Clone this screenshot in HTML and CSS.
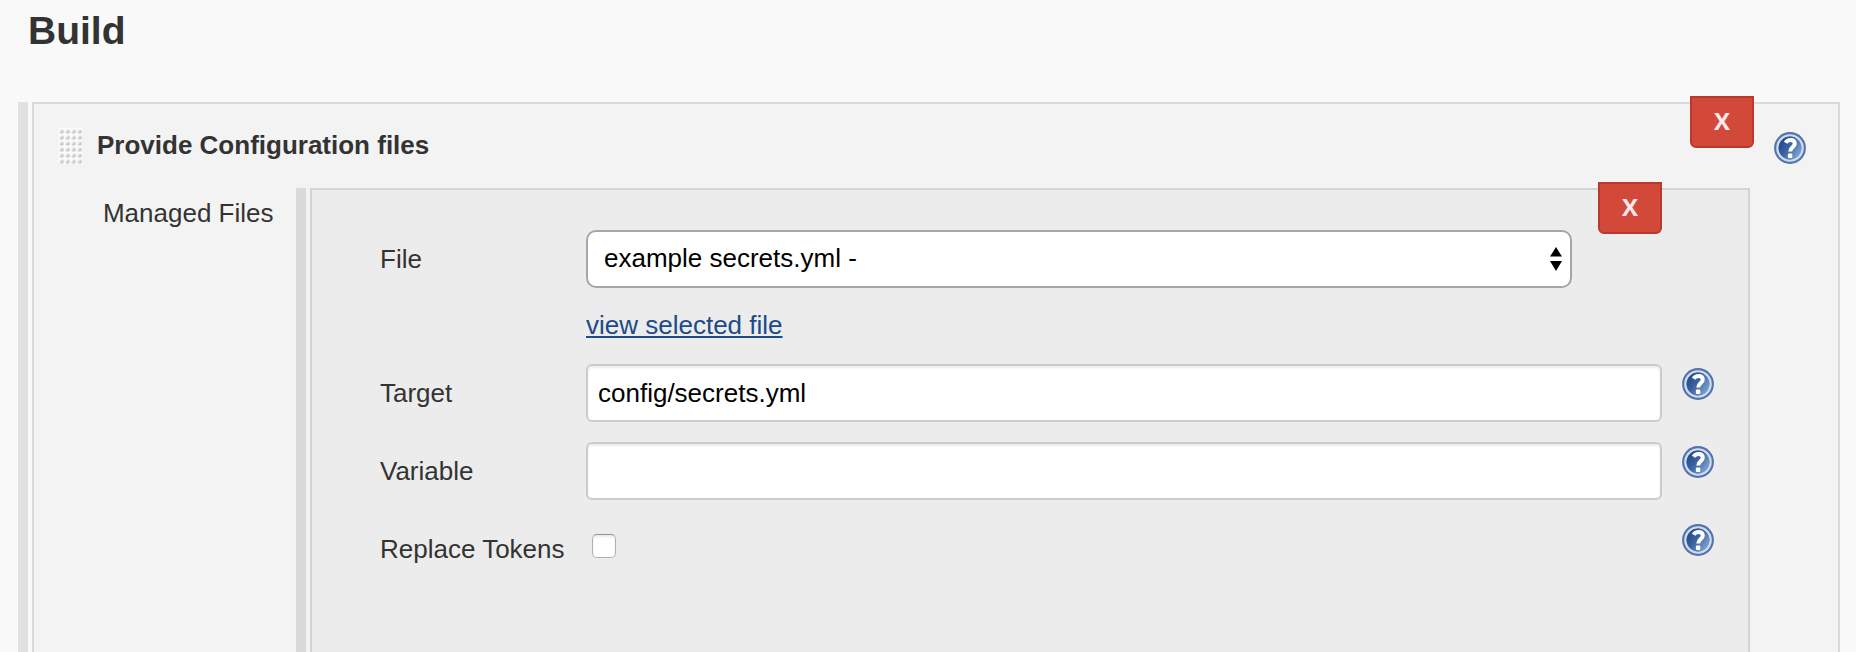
FILE: index.html
```
<!DOCTYPE html>
<html lang="en">
<head>
<meta charset="utf-8">
<title>Build</title>
<link rel="stylesheet" href="styles.css">
</head>
<body>
<svg width="0" height="0" class="defs" aria-hidden="true">
  <defs>
    <linearGradient id="ball" x1="0" y1="0.1" x2="1" y2="0.8">
      <stop offset="0" stop-color="#1d4585"/>
      <stop offset="0.45" stop-color="#3a62a0"/>
      <stop offset="1" stop-color="#86a9d6"/>
    </linearGradient>
    <symbol id="help" viewBox="0 0 32 32">
      <circle cx="16" cy="16" r="15.9" fill="#5373aa"/>
      <circle cx="16" cy="16" r="12.6" fill="none" stroke="#cfdcf0" stroke-width="2.4"/>
      <circle cx="16" cy="16" r="11.4" fill="url(#ball)"/>
      <path d="M11.6 10.8C12.8 8.8 14.5 8.1 16.6 8.1C19.4 8.1 20.8 9.6 20.8 11.7C20.8 14.9 16.2 15.3 16.2 19.6" fill="none" stroke="#fff" stroke-width="4"/>
      <rect x="13.9" y="21.6" width="4.4" height="4.4" rx="1" fill="#fff"/>
    </symbol>
    <linearGradient id="bead" x1="0" y1="0" x2="1" y2="1">
      <stop offset="0.15" stop-color="#f4f4f4"/>
      <stop offset="0.65" stop-color="#c8c8c8"/>
      <stop offset="1" stop-color="#c8c8c8"/>
    </linearGradient>
    <pattern id="dots" width="6" height="6" patternUnits="userSpaceOnUse">
      <rect width="6" height="6" fill="#fafafa"/>
      <rect x="1.4" y="1.4" width="4.2" height="4.2" rx="1.4" fill="url(#bead)"/>
    </pattern>
  </defs>
</svg>
<h1 class="title">Build</h1>
<main class="chunk">
  <section class="panel">
    <button class="remove">X</button>
    <header class="head">
      <svg class="grip" width="24" height="36"><rect width="24" height="36" fill="url(#dots)"/></svg>
      <h2 class="name">Provide Configuration files</h2>
      <svg class="help"><use href="#help"/></svg>
    </header>
    <div class="managed">
      <div class="managed-label">Managed Files</div>
      <div class="chunk inner">
        <section class="panel">
          <button class="remove">X</button>
          <div class="form">
            <label class="label">File</label>
            <div class="select"><span>example secrets.yml -</span>
              <svg width="12" height="24" viewBox="0 0 12 24"><path d="M6 0L12 9.6H0ZM6 24L12 14H0Z"/></svg>
            </div>
            <a class="link">view selected file</a>
            <label class="label">Target</label>
            <div class="input">config/secrets.yml</div>
            <svg class="help"><use href="#help"/></svg>
            <label class="label">Variable</label>
            <div class="input"></div>
            <svg class="help"><use href="#help"/></svg>
            <label class="label">Replace Tokens</label>
            <div class="check"></div>
            <svg class="help"><use href="#help"/></svg>
          </div>
        </section>
      </div>
    </div>
  </section>
</main>
</body>
</html>
```
FILE: styles.css
```
* { box-sizing: border-box; }
body {
  margin: 0;
  height: 652px;
  overflow: hidden;
  display: flex;
  flex-direction: column;
  background: #f9f9f9;
  color: #333;
  font: 26px/30px "Liberation Sans", Arial, sans-serif;
}
.defs { position: absolute; }
.title {
  margin: 0;
  padding: 8px 0 0 28px;
  height: 102px;
  flex: none;
  font-size: 39px;
  line-height: 46px;
}
.chunk {
  flex: 1;
  display: flex;
  margin: 0 16px 0 18px;
  padding-left: 4px;
  border-left: 10px solid #e1e1e1;
}
.panel {
  position: relative;
  flex: 1;
  display: flex;
  flex-direction: column;
  border: 2px solid #dadada;
  border-bottom: 0;
  background: #f3f3f3;
}
.inner {
  margin: 0 88px 0 22.5px;
  border-left-color: #dadada;
}
.inner .panel { background: #ececec; border-color: #d4d4d4; }
.remove {
  position: absolute;
  top: -8px;
  right: 84px;
  width: 64px;
  height: 52px;
  padding: 0 0 4px;
  border: 2px solid #b93a2c;
  border-radius: 0 0 6px 6px;
  background: #d24939;
  color: #fbe9ec;
  font: bold 24px "Open Sans", sans-serif;
}
.inner .remove { right: 86px; }
.head {
  display: flex;
  align-items: flex-start;
  height: 84px;
  padding: 24px 32px 0 24px;
}
.name {
  flex: 1;
  margin: 2px 0 0 15px;
  font-size: 26px;
  line-height: 30px;
}
.help { width: 32px; height: 32px; margin-top: 4px; }
.managed { flex: 1; display: flex; }
.managed-label {
  width: 239.5px;
  padding-top: 10px;
  text-align: right;
  white-space: nowrap;
}
.form {
  display: grid;
  grid-template-columns: 206px 1076px 52px;
  grid-template-rows: 58px 36px 58px 58px 58px;
  row-gap: 20px;
  padding: 40px 0 0 68px;
}
.label { grid-column: 1; padding-top: 14px; white-space: nowrap; }
.form .help { grid-column: 3; margin-left: 20px; }
.select {
  width: 986px;
  display: flex;
  justify-content: space-between;
  align-items: center;
  padding: 0 8px 0 16px;
  border: 2px solid #a6a6a6;
  border-radius: 10px;
  background: #fff;
  color: #000;
}
.select span { margin-top: -3px; }
.link {
  grid-column: 2;
  padding-top: 2px;
  color: #204a87;
  text-decoration: underline;
  text-decoration-thickness: 2px;
  text-underline-offset: 2px;
  text-decoration-skip-ink: none;
}
.input {
  padding: 12px 10px;
  border: 2px solid #ccc;
  border-radius: 6px;
  background: #fff;
  box-shadow: inset 0 2px 2px rgba(0,0,0,.075);
  color: #000;
}
.check {
  width: 24px;
  height: 24px;
  margin: 14px 0 0 6px;
  border: 1px solid #b0b0b0;
  border-top-color: #929292;
  border-radius: 5px;
  background: #fff;
  box-shadow: inset 0 2px 2px rgba(0,0,0,.08);
}
```
